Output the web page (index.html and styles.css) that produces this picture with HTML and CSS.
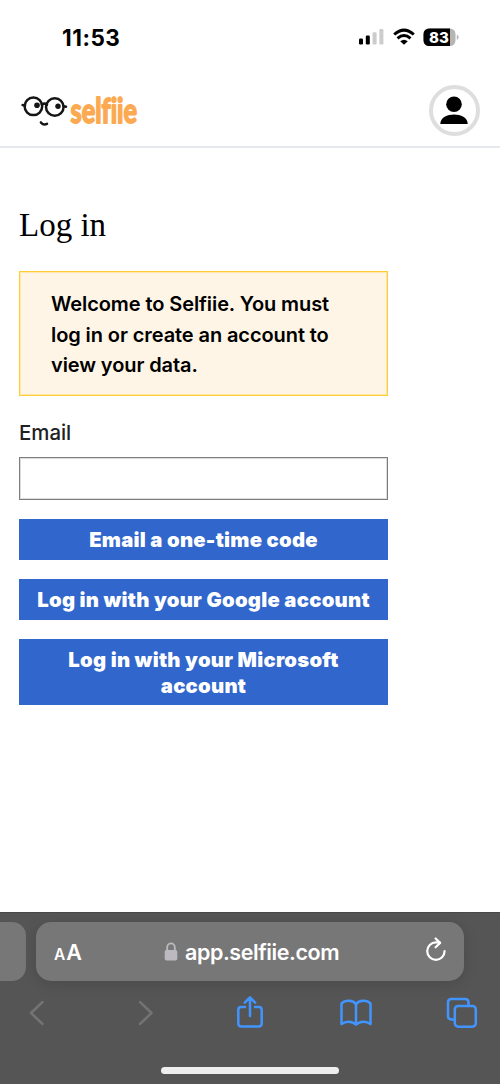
FILE: index.html
```html
<!DOCTYPE html>
<html lang="en">
<head>
<meta charset="utf-8">
<title>Log in</title>
<link rel="stylesheet" href="styles.css">
</head>
<body>
<div class="phone">
  <div class="status">
    <span class="time">11:53</span>
    <div class="indicators">
      <svg width="26" height="18" viewBox="0 0 26 18"><rect x="1" y="10.5" width="4" height="6" rx="1.2"/><rect x="7.8" y="7.5" width="4" height="9" rx="1.2"/><rect x="14.6" y="4.3" width="4" height="12.2" rx="1.2" fill="#ccc"/><rect x="21.4" y="1" width="4" height="15.5" rx="1.2" fill="#ccc"/></svg>
      <svg class="wifi" width="22" height="18" viewBox="0 0 22 18" fill="none" stroke="#000" stroke-width="3"><path d="M1.2 6.5Q11 -2.2 20.8 6.5"/><path d="M4.5 10.4Q11 4.6 17.5 10.4"/><path d="M7.2 13.2Q11 10.2 14.8 13.2L11 16.8Z" fill="#000" stroke="none"/></svg>
      <svg class="battery" width="36" height="19" viewBox="0 0 36 19"><rect x=".5" y=".5" width="32" height="17.5" rx="5.5" fill="#b5b5b5"/><path d="M6 .5H27V18H6A5.5 5.5 0 0 1 .5 12.5V6A5.5 5.5 0 0 1 6 .5Z"/><path d="M33.8 6.5Q37.5 9.2 33.8 12Z" fill="#b5b5b5"/><text class="percent" x="16" y="14.6">83</text></svg>
    </div>
  </div>
  <header class="nav">
    <svg class="logo" width="120" height="40" viewBox="0 0 120 40">
      <g fill="none" stroke="#151515" stroke-width="2.5" stroke-linecap="round"><circle cx="13.4" cy="16.3" r="8.8"/><circle cx="34.8" cy="17" r="8.8"/><path d="M2.6 15L5 15.6M22 14.6Q24.4 12.6 27 14.7M43.6 16.1L46 16.7M20.9 32.4Q23.4 35.6 27 33.9"/></g>
      <circle cx="17" cy="15.3" r="2.8" fill="#151515"/><circle cx="38" cy="16.2" r="2.7" fill="#151515"/>
      <text class="wordmark" transform="translate(50.6 33) scale(.7 1)" textLength="95" lengthAdjust="spacingAndGlyphs">selfiie</text>
    </svg>
    <div class="avatar"><svg width="30" height="30" viewBox="0 0 30 30"><circle cx="15" cy="9.2" r="7.8"/><path d="M1.3 29C1.3 22 8.4 19.4 15 19.4S28.7 22 28.7 29Z"/></svg></div>
  </header>
  <main class="content">
    <h1 class="title">Log in</h1>
    <p class="notice">Welcome to Selfiie. You must<br>log in or create an account to<br>view your data.</p>
    <label class="label" for="email">Email</label>
    <input class="field" id="email" type="email">
    <button class="button otp">Email a one-time code</button>
    <button class="button google">Log in with your Google account</button>
    <button class="button microsoft">Log in with your Microsoft<br>account</button>
  </main>
  <footer class="browser">
    <div class="tabs">
      <div class="previous"></div>
      <div class="address">
        <span class="reader"><small class="small-a">A</small>A</span>
        <span class="url"><svg width="14" height="20" viewBox="0 0 14 20"><path d="M3.2 9V5.2a3.8 3.8 0 0 1 7.6 0V9" fill="none" stroke="#bcbac0" stroke-width="1.8"/><rect x=".7" y="8" width="12.6" height="10.5" rx="1.8" fill="#bcbac0"/></svg><span class="domain">app.selfiie.com</span></span>
        <svg class="reload" width="22" height="26" viewBox="0 0 22 26" fill="none" stroke="#fff" stroke-width="2.2" stroke-linecap="round" stroke-linejoin="round"><path d="M19.6 14.1A8.7 8.7 0 1 1 10.9 5.4H15M10.6 1.5L15.1 5.9L10.6 10.3"/></svg>
      </div>
    </div>
    <div class="tools">
      <svg width="16" height="26" viewBox="0 0 16 26" class="icon muted back"><path d="M13.5 2L2 13L13.5 24"/></svg>
      <svg width="16" height="26" viewBox="0 0 16 26" class="icon muted forward"><path d="M2 2L13.5 13L2 24"/></svg>
      <svg width="28" height="34" viewBox="0 0 28 34" class="icon"><path d="M9 11H5.2Q2.3 11 2.3 13.9V27.6Q2.3 30.5 5.2 30.5H22.8Q25.7 30.5 25.7 27.6V13.9Q25.7 11 22.8 11H19M14 20V1.5M8.8 6.6L14 1.4L19.2 6.6"/></svg>
      <svg width="32" height="28" viewBox="0 0 32 28" class="icon"><path d="M16 5.3V25M16 5.3C12.8.9 5.2.8 1.5 4.5V25C5.8 21.8 12 21.8 16 25.7C20 21.8 26.2 21.8 30.5 25V4.5C26.8.8 19.2.9 16 5.3Z"/></svg>
      <svg width="32" height="32" viewBox="0 0 32 32" class="icon"><path d="M8.5 22.5H5.4Q2 22.5 2 19.1V5.4Q2 2 5.4 2H19.1Q22.5 2 22.5 5.4V9"/><rect x="8.8" y="9" width="21" height="20.7" rx="3.4"/></svg>
    </div>
    <div class="home"></div>
  </footer>
</div>
</body>
</html>
```
FILE: styles.css
```css
* { box-sizing: border-box; }
body { margin: 0; background: #fff; color: #000; font-family: Inter, "Liberation Sans", sans-serif; }
svg { display: block; flex: none; }
.phone { width: 500px; height: 1084px; display: flex; flex-direction: column; overflow: hidden; }
.status { height: 76px; display: flex; justify-content: space-between; padding: 24px 41px 0 62px; }
.time { font-size: 22.5px; line-height: 27px; font-weight: 700; letter-spacing: .5px; }
.indicators { display: flex; padding-top: 4px; }
.wifi { margin-left: 9px; }
.battery { margin-left: 8px; }
.percent { font: 800 15px Inter, sans-serif; fill: #fff; text-anchor: middle; }
.nav { height: 72px; display: flex; justify-content: space-between; align-items: flex-start; padding: 9px 20px 0 20px; border-bottom: 2px solid #e5e8ec; }
.logo { margin-top: 5px; overflow: visible; }
.wordmark { font: 700 34px Lato, sans-serif; font-variant-ligatures: none; fill: #fcaa52; stroke: #fcaa52; stroke-width: 1.8px; stroke-linejoin: round; }
.avatar { width: 51px; height: 51px; border: 4px solid #dedede; border-radius: 50%; display: flex; justify-content: center; padding-top: 6px; }
.avatar svg { margin-left: -1px; }
.content { flex: 1; width: 407px; padding: 56px 19px 0; display: flex; flex-direction: column; }
.title { margin: 0; font: 400 33px/42px "Liberation Serif", serif; }
.notice { margin: 25px 0 0; height: 125px; padding: 17px 31px; border: 1px solid #fc3; box-shadow: inset 0 0 0 1px #ffe8a8; background: #fff5e6; font-size: 20px; line-height: 30.6px; font-weight: 600; letter-spacing: -.09px; white-space: nowrap; }
.label { margin-top: 22px; color: #212121; font-size: 20.4px; line-height: 29px; font-weight: 500; }
.field { width: 100%; height: 43px; margin: 10px 0 0; border: 1px solid #7d7d7f; box-shadow: inset 0 0 0 1px #ddd; border-radius: 0; background: #fff; }
.button { width: 100%; height: 41px; margin: 19px 0 0; padding: 1px 0 0; border: 0; background: #3166cc; color: #fff; font: 900 20.3px/25.5px Inter, sans-serif; letter-spacing: .25px; white-space: nowrap; }
.microsoft { height: 66px; }
.browser { height: 172px; background: #555; border-top: 1px solid #484848; display: flex; flex-direction: column; }
.tabs { display: flex; gap: 10px; padding-top: 9px; }
.previous { width: 26px; height: 59px; background: #777; border-radius: 0 14px 14px 0; }
.address { width: 428px; height: 59px; background: #777; border-radius: 15px; box-shadow: 0 3px 14px #0002; color: #fff; display: flex; align-items: center; padding: 0 17px 0 18px; }
.reader { width: 110px; font-size: 21.5px; font-weight: 600; }
.small-a { font-size: 15.5px; margin-right: 1px; }
.url { display: flex; align-items: center; gap: 7px; }
.domain { font-size: 21.5px; font-weight: 600; letter-spacing: -.42px; }
.reload { margin: 0 0 3px auto; }
.tools { height: 64px; display: grid; grid-template-columns: repeat(5, 106px); justify-content: center; justify-items: center; align-items: center; }
.icon { fill: none; stroke: #4294ff; stroke-width: 2.5; stroke-linecap: round; stroke-linejoin: round; }
.muted { stroke: #737373; }
.back { margin-right: 2px; }
.forward { margin-left: 3px; }
.home { width: 178px; height: 7px; border-radius: 4px; background: #eee; margin: 22px 0 0 161px; }
```
